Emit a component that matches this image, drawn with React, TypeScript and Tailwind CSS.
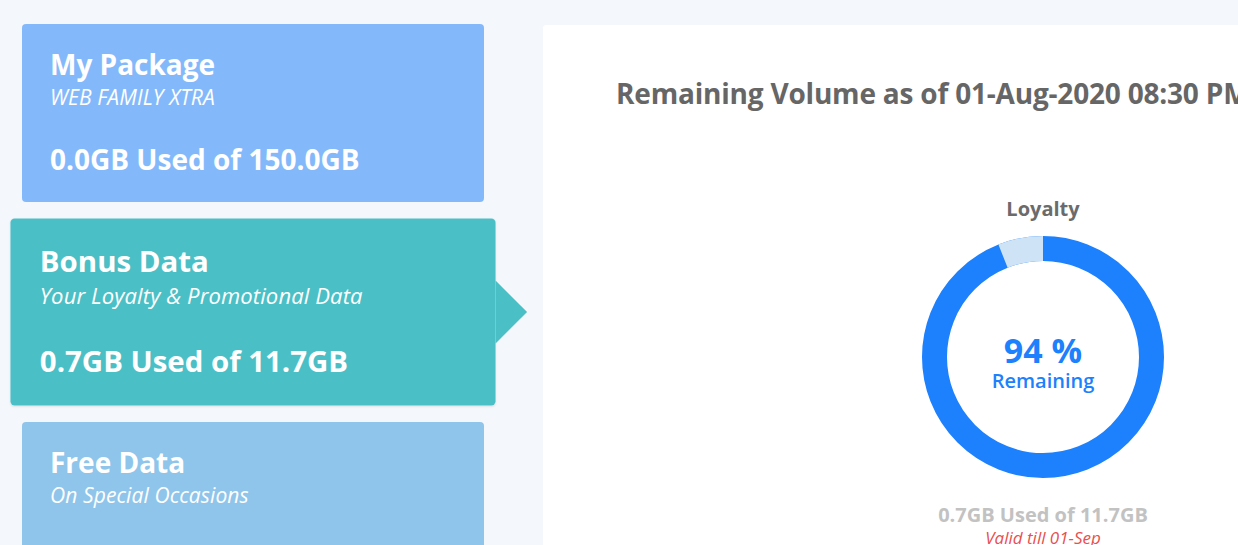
import React from "react";

const font = { fontFamily: '"Open Sans", "Noto Sans", sans-serif' };

function Donut() {
  const r = 108.5;
  const c = 2 * Math.PI * r;
  const used = 0.06;
  return (
    <div className="relative w-[242px] h-[242px]">
      <svg width="242" height="242" viewBox="0 0 242 242">
        <circle cx="121" cy="121" r={r} fill="none" stroke="#1d80fc" strokeWidth="25" />
        <circle
          cx="121"
          cy="121"
          r={r}
          fill="none"
          stroke="#cfe3f7"
          strokeWidth="25"
          strokeDasharray={`${c * used} ${c}`}
          transform="rotate(-90 121 121) scale(1 -1) translate(0 -242)"
        />
      </svg>
      <div className="absolute inset-0 flex flex-col items-center pt-[96px]">
        <div className="text-[34px] leading-[36px] font-bold text-[#1d80fc]">94 %</div>
        <div className="text-[20px] leading-[26px] font-semibold text-[#1d80fc]">Remaining</div>
      </div>
    </div>
  );
}

function Card({
  title,
  subtitle,
  usage,
  bg,
}: {
  title: string;
  subtitle: string;
  usage?: string;
  bg: string;
}) {
  return (
    <div className={`h-[178px] shrink-0 rounded-[4px] px-[28px] pt-[22px] text-white ${bg}`}>
      <div className="text-[28px] leading-[36px] font-bold whitespace-nowrap">{title}</div>
      <div className="mt-[2px] text-[21px] leading-[26px] italic tracking-[0.1px] whitespace-nowrap">{subtitle}</div>
      {usage && <div className="mt-[31px] text-[28px] leading-[36px] font-bold whitespace-nowrap">{usage}</div>}
    </div>
  );
}

export default function App() {
  return (
    <div className="w-[1238px] h-[545px] overflow-hidden bg-[#f4f7fb] flex pt-[24px] pl-[22px]" style={font}>
      <div className="w-[462px] shrink-0 flex flex-col gap-[21px]">
        <Card title="My Package" subtitle="WEB FAMILY XTRA" usage="0.0GB Used of 150.0GB" bg="bg-[#83b9fb]" />
        <div className="relative shrink-0 scale-[1.05] shadow-[0_1px_2px_rgba(0,0,0,0.08)] rounded-[4px]">
          <Card
            title="Bonus Data"
            subtitle="Your Loyalty & Promotional Data"
            usage="0.7GB Used of 11.7GB"
            bg="bg-[#4bbfc6]"
          />
          <div className="absolute right-[-30px] top-[59px] w-0 h-0 border-y-[30px] border-y-transparent border-l-[30px] border-l-[#4bbfc6]" />
        </div>
        <Card title="Free Data" subtitle="On Special Occasions" bg="bg-[#8fc5ea]" />
      </div>
      <div className="ml-[59px] mt-[1px] flex-1 min-w-0 bg-white rounded-tl-[3px] flex flex-col">
        <div className="pl-[73px] pt-[49px] whitespace-nowrap text-[28px] leading-[38px] font-bold tracking-[-0.2px] text-[#666666]">
          Remaining Volume as of 01-Aug-2020 08:30 PM
        </div>
        <div className="ml-[346px] mt-[7px] w-[2px] h-[2px] rounded-full bg-[#e04848]" />
        <div className="ml-[379px] w-[242px] flex flex-col items-center">
          <div className="mt-[77px] text-[20px] leading-[26px] font-bold text-[#6b6b6b]">Loyalty</div>
          <div className="mt-[14px]">
            <Donut />
          </div>
          <div className="mt-[24px] whitespace-nowrap text-[20px] leading-[26px] font-bold text-[#c2c2c2]">
            0.7GB Used of 11.7GB
          </div>
          <div className="whitespace-nowrap text-[17px] leading-[20px] italic text-[#e8504f]">
            Valid till 01-Sep
          </div>
        </div>
      </div>
    </div>
  );
}
